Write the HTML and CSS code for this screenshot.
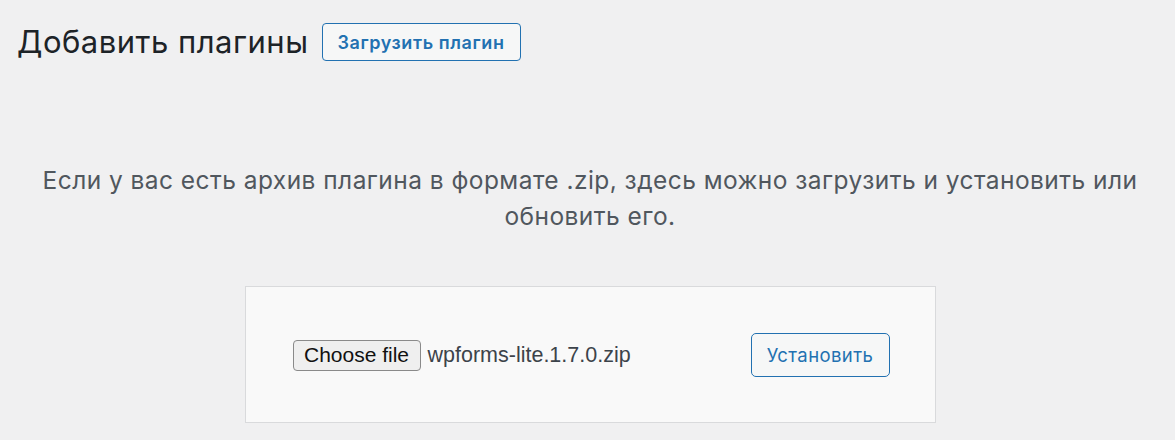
FILE: index.html
```html
<!DOCTYPE html>
<html lang="ru">
<head>
<meta charset="utf-8">
<title>Добавить плагины</title>
<link rel="stylesheet" href="styles.css">
</head>
<body>
<div class="wrap">
  <div class="header">
    <h1 class="page-title">Добавить плагины</h1>
    <a class="title-action" href="#">Загрузить плагин</a>
  </div>
  <div class="upload-plugin">
    <p class="install-help">Если у вас есть архив плагина в формате .zip, здесь можно загрузить и установить или обновить его.</p>
    <form class="upload-form">
      <div class="file-field">
        <span class="file-button">Choose file</span>
        <span class="file-name">wpforms-lite.1.7.0.zip</span>
      </div>
      <button type="button" class="install-button">Установить</button>
    </form>
  </div>
</div>
</body>
</html>
```
FILE: styles.css
```css
html, body {
  margin: 0;
  padding: 0;
  background: #f0f0f1;
  height: 100%;
}
body {
  font-family: Inter, Roboto, "Noto Sans", sans-serif;
  color: #1d2327;
}
.wrap {
  padding: 20px 12px 0 17px;
}
.header {
  display: flex;
  align-items: center;
  gap: 13px;
}
.page-title {
  margin: 0;
  font-size: 31px;
  font-weight: 400;
  letter-spacing: 0.5px;
  line-height: 44px;
  color: #1d2327;
}
.title-action {
  display: inline-flex;
  align-items: center;
  justify-content: center;
  width: 199px;
  height: 38px;
  box-sizing: border-box;
  padding: 0;
  border: 1px solid #2271b1;
  border-radius: 4px;
  background: #f6f7f7;
  color: #2271b1;
  font-size: 18px;
  font-weight: 600;
  letter-spacing: 0.6px;
  text-decoration: none;
}
.upload-plugin {
  padding-top: 98px;
}
.install-help {
  margin: 0;
  text-align: center;
  font-size: 24.5px;
  letter-spacing: 0.45px;
  line-height: 36px;
  color: #50575e;
}
.upload-form {
  display: flex;
  justify-content: space-between;
  align-items: center;
  width: 691px;
  box-sizing: border-box;
  margin: 52px auto 0;
  padding: 46px 45px 45px 47px;
  background: #f9f9f9;
  border: 1px solid #d9dadc;
}
.file-field {
  display: flex;
  align-items: center;
  gap: 7px;
}
.file-button {
  display: inline-flex;
  align-items: center;
  justify-content: center;
  width: 128px;
  height: 31px;
  box-sizing: border-box;
  border: 1px solid #8a8a8a;
  border-radius: 4px;
  background: #efefef;
  font-family: "Liberation Sans", Arial, sans-serif;
  font-size: 21px;
  color: #111;
}
.file-name {
  font-family: "Liberation Sans", Arial, sans-serif;
  font-size: 21.5px;
  color: #3c434a;
}
.install-button {
  width: 139px;
  height: 44px;
  box-sizing: border-box;
  border: 1px solid #2271b1;
  border-radius: 5px;
  background: #f6f7f7;
  color: #2271b1;
  font-family: Inter, Roboto, "Noto Sans", sans-serif;
  font-size: 18.5px;
  letter-spacing: 0.4px;
  padding: 0;
}
```
